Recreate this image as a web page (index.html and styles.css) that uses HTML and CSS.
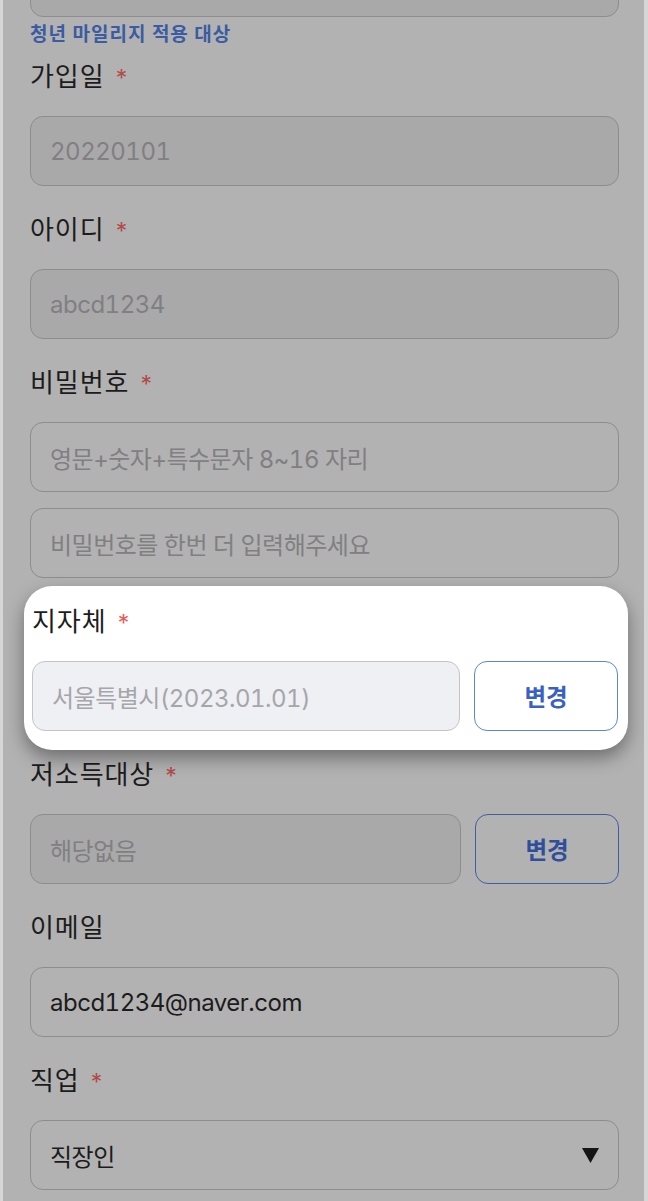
FILE: index.html
```html
<!DOCTYPE html>
<html lang="ko">
<head>
<meta charset="utf-8">
<title>회원정보</title>
<link rel="stylesheet" href="styles.css">
</head>
<body>
<div class="page">
  <div class="input disabled top-cut"></div>
  <p class="hint">청년 마일리지 적용 대상</p>

  <div class="field first">
    <div class="label">가입일 <span class="req">*</span></div>
    <div class="input disabled"><span class="muted">20220101</span></div>
  </div>

  <div class="field">
    <div class="label">아이디 <span class="req">*</span></div>
    <div class="input disabled"><span class="muted">abcd1234</span></div>
  </div>

  <div class="field">
    <div class="label">비밀번호 <span class="req">*</span></div>
    <div class="input"><span class="muted">영문+숫자+특수문자 8~16 자리</span></div>
    <div class="input second"><span class="muted">비밀번호를 한번 더 입력해주세요</span></div>
  </div>

  <div class="spotlight">
    <div class="label">지자체 <span class="req">*</span></div>
    <div class="row">
      <div class="input"><span class="muted">서울특별시(2023.01.01)</span></div>
      <button class="btn" type="button">변경</button>
    </div>
  </div>

  <div class="field after-spot">
    <div class="label">저소득대상 <span class="req">*</span></div>
    <div class="row">
      <div class="input disabled"><span class="muted">해당없음</span></div>
      <button class="btn" type="button">변경</button>
    </div>
  </div>

  <div class="field">
    <div class="label">이메일</div>
    <div class="input"><span class="value">abcd1234@naver.com</span></div>
  </div>

  <div class="field">
    <div class="label">직업 <span class="req">*</span></div>
    <div class="input select">
      <span class="value">직장인</span>
      <svg class="caret" width="17" height="15" viewBox="0 0 17 15"><polygon points="0,0 17,0 8.5,15" fill="#151515"/></svg>
    </div>
  </div>
</div>
</body>
</html>
```

FILE: styles.css
```css
* { box-sizing: border-box; }

html, body {
  margin: 0;
  padding: 0;
  height: 100%;
  overflow: hidden;
}

body {
  background: #b2b2b2;
  font-family: "Inter", "Noto Sans CJK KR", sans-serif;
  color: #1b1b1b;
}

.page {
  min-height: 1201px;
  border-left: 3px solid #d6d6d6;
  border-right: 4px solid #d6d6d6;
  padding: 0 25px 0 27px;
  background: #b2b2b2;
  overflow: hidden;
}

.input {
  height: 70px;
  border: 1.5px solid #8d8d8d;
  border-radius: 13px;
  background: #b2b2b2;
  display: flex;
  align-items: center;
  padding: 0 20px 0 19px;
  font-size: 24px;
  letter-spacing: -0.5px;
  font-variant-numeric: tabular-nums;
}

.input.disabled {
  background: #a9a9aa;
}

.top-cut {
  margin-top: -53px;
}

.hint {
  margin: 8px 0 0;
  font-size: 19px;
  line-height: 20px;
  font-weight: 700;
  color: #3b5ba2;
  letter-spacing: 1px;
}

.field { margin-top: 29px; }
.field.first { margin-top: 17px; }
.field.after-spot { margin-top: 10px; }

.label {
  height: 30px;
  line-height: 30px;
  font-size: 26px;
  margin-bottom: 24px;
  letter-spacing: 0.9px;
  color: #1c1c1c;
}

.req {
  color: #b44a48;
  font-size: 23px;
  letter-spacing: 0;
  margin-left: 3px;
}

.muted { color: #808081; }
.value { color: #1c1c1c; }

.input.second { margin-top: 16px; }

.row {
  display: flex;
  gap: 14px;
}

.row .input { flex: 1; }

.btn {
  width: 144px;
  height: 70px;
  border: 1.5px solid #3e5ea6;
  border-radius: 13px;
  background: #b2b2b2;
  color: #2f4f9c;
  font-family: "Inter", "Noto Sans CJK KR", sans-serif;
  font-size: 23.5px;
  font-weight: 700;
  padding: 0;
}

.spotlight {
  margin: 8px -9px 0 -6px;
  padding: 21px 10px 19px 8px;
  background: #ffffff;
  border-radius: 28px;
  box-shadow: 0 8px 18px rgba(0, 0, 0, 0.38);
  position: relative;
}

.spotlight .label { color: #1d1d1d; }
.spotlight .req { color: #ee5a5a; }
.spotlight .input {
  background: #eff0f4;
  border-color: #c4c4c8;
}
.spotlight .muted { color: #a6a6aa; }
.spotlight .btn {
  background: #ffffff;
  border-color: #5d86d9;
  color: #3961c4;
}

.select {
  justify-content: space-between;
  padding-right: 19px;
}

.caret { display: block; }
```
